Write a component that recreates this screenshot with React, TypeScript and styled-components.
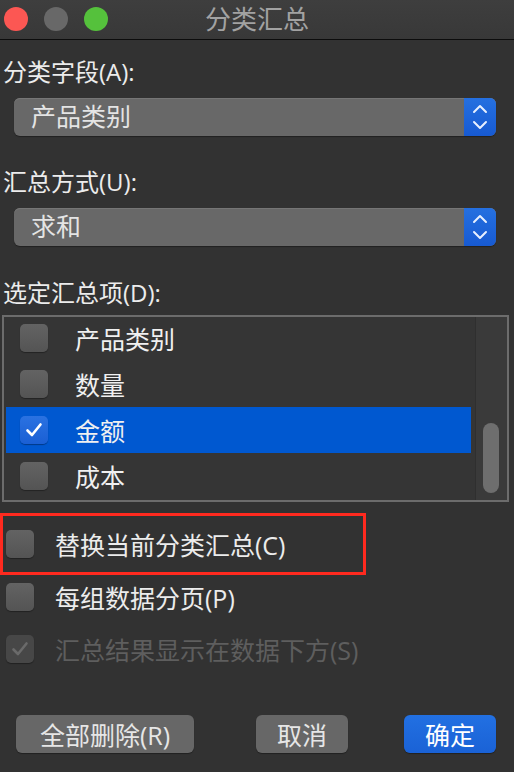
import React from "react";
import styled, { createGlobalStyle } from "styled-components";

const Global = createGlobalStyle`
  html, body { margin: 0; padding: 0; background: #323232; }
  body { font-family: "Open Sans", "Noto Sans CJK SC", sans-serif; }
  * { box-sizing: border-box; }
`;

const Window = styled.div`
  width: 514px;
  height: 772px;
  background: #323232;
  display: flex;
  flex-direction: column;
  color: #e6e6e6;
  overflow: hidden;
`;

const TitleBar = styled.div`
  height: 40px;
  flex: none;
  display: grid;
  grid-template-columns: 1fr auto 1fr;
  align-items: center;
  background: linear-gradient(#3e3e3e, #383838);
  border-bottom: 1px solid #0c0c0c;
`;

const Lights = styled.div`
  display: flex;
  gap: 16px;
  padding-left: 4px;
  margin-top: -2px;
`;

const Light = styled.span<{ $c: string }>`
  width: 24px;
  height: 24px;
  border-radius: 50%;
  background: ${(p) => p.$c};
`;

const Title = styled.div`
  font-size: 26px;
  color: #a2a2a2;
  line-height: 30px;
  margin-top: -2px;
`;

const Label = styled.div<{ $mt: number }>`
  margin-top: ${(p) => p.$mt}px;
  padding-left: 3px;
  font-size: 24px;
  line-height: 30px;
  color: #ececec;
`;

const Select = styled.div`
  margin: 11px 18px 0 14px;
  height: 38px;
  display: flex;
  border-radius: 6px;
  overflow: hidden;
  background: #686868;
  box-shadow: inset 0 1px 0 #767676, 0 1px 1px rgba(0, 0, 0, 0.35);
`;

const SelectText = styled.div`
  flex: 1;
  padding-left: 17px;
  font-size: 25px;
  line-height: 36px;
  color: #e4e4e4;
`;

const Stepper = styled.div`
  width: 32px;
  background: linear-gradient(#2570e0, #175ad2);
  display: flex;
  align-items: center;
  justify-content: center;
`;

const ListBox = styled.div`
  margin: 7px 5px 0 2px;
  height: 187px;
  border: 2px solid #6c6c6c;
  display: flex;
  background: #353535;
  overflow: hidden;
`;

const Rows = styled.div`
  flex: 1;
  padding: 0 2px 0 2px;
  margin-top: -2px;
`;

const Row = styled.div<{ $sel?: boolean }>`
  height: 46px;
  display: flex;
  align-items: center;
  gap: 27px;
  padding-left: 14px;
  background: ${(p) => (p.$sel ? "#0058d0" : "transparent")};
  font-size: 25px;
  color: #f0f0f0;
`;

const Track = styled.div`
  width: 32px;
  margin-left: 2px;
  background: #3a3a3a;
  border-left: 1px solid #2f2f2f;
  display: flex;
  flex-direction: column;
  justify-content: flex-end;
  align-items: center;
  padding-bottom: 7px;
`;

const Thumb = styled.div`
  width: 16px;
  height: 70px;
  border-radius: 8px;
  background: #6e6e6e;
  margin-left: -2px;
`;

const Box = styled.span<{ $on?: boolean; $dis?: boolean }>`
  width: 28px;
  height: 28px;
  flex: none;
  border-radius: 5px;
  display: flex;
  align-items: center;
  justify-content: center;
  background: ${(p) =>
    p.$on
      ? "linear-gradient(#2a72e2, #1a5fd4)"
      : p.$dis
      ? "#474747"
      : "linear-gradient(#636363, #545454)"};
  box-shadow: 0 1px 1px rgba(0, 0, 0, 0.35);
`;

const Highlight = styled.div`
  margin-top: 11px;
  width: 366px;
  height: 62px;
  border: 3px solid #ff2a1f;
  display: flex;
  align-items: center;
  gap: 21px;
  padding-left: 3px;
  font-size: 25px;
  color: #ececec;
`;

const Option = styled.div<{ $mt: number; $dis?: boolean }>`
  margin-top: ${(p) => p.$mt}px;
  height: 28px;
  display: flex;
  align-items: center;
  gap: 21px;
  padding-left: 6px;
  font-size: 25px;
  color: ${(p) => (p.$dis ? "#5e5e5e" : "#ececec")};
`;

const Buttons = styled.div`
  margin-top: 52px;
  display: flex;
  padding-left: 16px;
`;

const Button = styled.div<{ $w: number; $ml?: number; $primary?: boolean }>`
  width: ${(p) => p.$w}px;
  margin-left: ${(p) => p.$ml ?? 0}px;
  height: 38px;
  border-radius: 6px;
  display: flex;
  align-items: center;
  justify-content: center;
  font-size: 25px;
  color: ${(p) => (p.$primary ? "#ffffff" : "#e6e6e6")};
  background: ${(p) => (p.$primary ? "linear-gradient(#2270e2, #1a62d6)" : "#676767")};
  box-shadow: 0 1px 1px rgba(0, 0, 0, 0.35);
`;

const Chevrons = () => (
  <svg width="16" height="26" viewBox="0 0 16 26" fill="none">
    <path d="M2 8 L8 2 L14 8" stroke="#e8f0ff" strokeWidth="2" strokeLinecap="round" strokeLinejoin="round" />
    <path d="M2 18 L8 24 L14 18" stroke="#e8f0ff" strokeWidth="2" strokeLinecap="round" strokeLinejoin="round" />
  </svg>
);

const Check = ({ color }: { color: string }) => (
  <svg width="20" height="20" viewBox="0 0 20 20" fill="none">
    <path d="M3.5 10.5 L8 15 L16.5 4.5" stroke={color} strokeWidth="2.6" strokeLinecap="round" strokeLinejoin="round" />
  </svg>
);

const items = [
  { t: "产品类别", on: false },
  { t: "数量", on: false },
  { t: "金额", on: true },
  { t: "成本", on: false },
];

export default function App() {
  return (
    <Window>
      <Global />
      <TitleBar>
        <Lights>
          <Light $c="#fc5753" />
          <Light $c="#686868" />
          <Light $c="#55c13c" />
        </Lights>
        <Title>分类汇总</Title>
        <div />
      </TitleBar>

      <Label $mt={17}>分类字段(A):</Label>
      <Select>
        <SelectText>产品类别</SelectText>
        <Stepper>
          <Chevrons />
        </Stepper>
      </Select>

      <Label $mt={31}>汇总方式(U):</Label>
      <Select>
        <SelectText>求和</SelectText>
        <Stepper>
          <Chevrons />
        </Stepper>
      </Select>

      <Label $mt={32}>选定汇总项(D):</Label>
      <ListBox>
        <Rows>
          {items.map((it) => (
            <Row key={it.t} $sel={it.on}>
              <Box $on={it.on}>{it.on && <Check color="#ffffff" />}</Box>
              {it.t}
            </Row>
          ))}
        </Rows>
        <Track>
          <Thumb />
        </Track>
      </ListBox>

      <Highlight>
        <Box />
        替换当前分类汇总(C)
      </Highlight>
      <Option $mt={8}>
        <Box />
        每组数据分页(P)
      </Option>
      <Option $mt={24} $dis>
        <Box $dis>
          <Check color="#6a6a6a" />
        </Box>
        汇总结果显示在数据下方(S)
      </Option>

      <Buttons>
        <Button $w={178}>全部删除(R)</Button>
        <Button $w={92} $ml={62}>取消</Button>
        <Button $w={92} $ml={56} $primary>确定</Button>
      </Buttons>
    </Window>
  );
}
